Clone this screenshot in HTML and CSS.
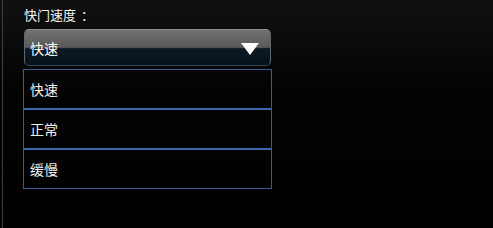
FILE: index.html
```html
<!DOCTYPE html>
<html lang="zh">
<head>
    <meta charset="UTF-8">
    <title>快门速度</title>
    <link rel="stylesheet" href="styles.css">
</head>
<body>
    <div class="panel">
        <div class="field_label">快门速度<span class="colon">：</span></div>
        <div class="select_box">
            <span class="select_value">快速</span>
            <span class="select_arrow"></span>
        </div>
        <div class="option_list">
            <div class="option">快速</div>
            <div class="option">正常</div>
            <div class="option">缓慢</div>
        </div>
    </div>
</body>
</html>
```

FILE: styles.css
```css
body {
    margin: 0;
    background: linear-gradient(#111111, #030303 40%, #000000);
    font-family: "Noto Sans CJK SC", "Liberation Sans", sans-serif;
    color: #f2f2f2;
    font-size: 13px;
}
.panel {
    margin-left: 2px;
    height: 228px;
    border-left: 1px solid #404040;
    padding-left: 21px;
    box-sizing: border-box;
}
.field_label {
    padding-top: 6px;
    line-height: 17px;
    height: 23px;
}
.colon {
    margin-left: 5px;
}
.select_box {
    width: 247px;
    height: 37px;
    box-sizing: border-box;
    border: 1px solid #5c6a70;
    border-top-color: #8c8c8c;
    border-bottom-color: #2a4a58;
    border-radius: 5px;
    background: linear-gradient(#727272 0%, #5a5a5a 48%, #444444 52%, #0d1b25 53%, #061019 100%);
    display: flex;
    align-items: center;
    justify-content: space-between;
    padding: 0 11px 0 5px;
}
.select_value {
    color: #ffffff;
    font-size: 14px;
}
.select_arrow {
    width: 0;
    height: 0;
    border-left: 9px solid transparent;
    border-right: 9px solid transparent;
    border-top: 12px solid #ffffff;
    margin-top: 3px;
}
.option_list {
    margin: 3px 0 0 -1px;
    width: 249px;
    box-sizing: border-box;
    border: 1px solid #3d5a98;
}
.option {
    height: 38px;
    line-height: 38px;
    padding-left: 6px;
    font-size: 14px;
    color: #f0f0f0;
}
.option + .option {
    border-top: 2px solid #3f66a6;
}
```
